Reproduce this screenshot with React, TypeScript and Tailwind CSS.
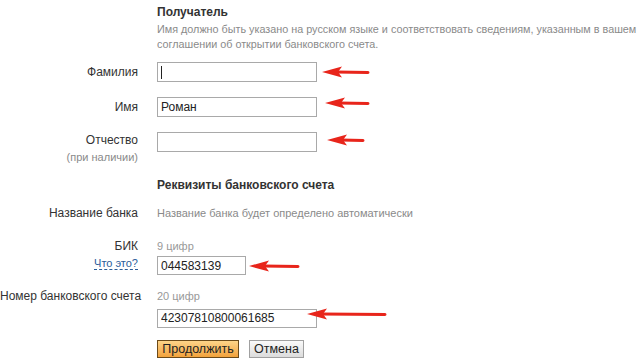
import React from 'react';

function Arrow({ width, className = '' }: { width: number; className?: string }) {
  // red hand-drawn style annotation arrow, pointing left
  return (
    <svg width={width} height="12" viewBox={`0 0 ${width} 12`} className={className}>
      <path d={`M14 6 L${width - 2} 6.5`} stroke="#e8251b" strokeWidth="3" strokeLinecap="round" />
      <path d="M0 6 L20 0.5 L16 6 L20 11.5 Z" fill="#e8251b" />
    </svg>
  );
}

function Label({ children }: { children: React.ReactNode }) {
  return <div className="w-[138px] shrink-0 text-right text-[12px] text-[#333]">{children}</div>;
}

export default function App() {
  return (
    <div className="w-[640px] h-[360px] bg-white overflow-hidden font-['Liberation_Sans',Arial,sans-serif]">
      {/* Получатель */}
      <div className="flex mt-[4px]">
        <Label>{null}</Label>
        <div className="ml-[19px]">
          <div className="text-[12px] leading-[16px] font-bold text-[#333]">Получатель</div>
          <div className="mt-[2px] w-[483px] text-[10.8px] leading-[15px] text-[#8a8a8a]">
            Имя должно быть указано на русском языке и соответствовать сведениям, указанным в вашем соглашении об открытии банковского счета.
          </div>
        </div>
      </div>

      {/* Фамилия */}
      <div className="flex mt-[10px]">
        <Label><div className="leading-[20px]">Фамилия</div></Label>
        <div className="ml-[19px] flex items-center">
          <div className="w-[160px] h-[20px] border border-[#a9a9a9] bg-white flex items-center pl-[3px]">
            <span className="w-px h-[13px] bg-[#222]" />
          </div>
          <Arrow width={48} className="ml-[5px]" />
        </div>
      </div>

      {/* Имя */}
      <div className="flex mt-[15px]">
        <Label><div className="leading-[20px]">Имя</div></Label>
        <div className="ml-[19px] flex items-start">
          <input
            readOnly
            value="Роман"
            className="w-[160px] h-[20px] border border-[#a9a9a9] px-[3px] text-[12px] text-[#222] outline-none"
          />
          <Arrow width={45} className="ml-[8px]" />
        </div>
      </div>

      {/* Отчество */}
      <div className="flex mt-[15px]">
        <Label>
          <div className="leading-[16px]">Отчество</div>
          <div className="mt-[2px] text-[11px] leading-[14px] text-[#8a8a8a]">(при наличии)</div>
        </Label>
        <div className="ml-[19px] flex items-start">
          <div className="w-[160px] h-[20px] border border-[#a9a9a9] bg-white" />
          <Arrow width={38} className="ml-[10px] mt-[2px]" />
        </div>
      </div>

      {/* Реквизиты */}
      <div className="flex mt-[13px]">
        <Label>{null}</Label>
        <div className="ml-[19px] text-[12px] leading-[16px] font-bold text-[#333]">Реквизиты банковского счета</div>
      </div>

      {/* Название банка */}
      <div className="flex mt-[12px]">
        <Label><div className="leading-[16px]">Название банка</div></Label>
        <div className="ml-[19px] text-[11px] leading-[16px] text-[#8a8a8a]">Название банка будет определено автоматически</div>
      </div>

      {/* БИК */}
      <div className="flex mt-[17px]">
        <Label>
          <div className="leading-[16px]">БИК</div>
          <div className="mt-[2px] leading-[14px] text-[11px]">
            <span className="text-[#2a5d9a] border-b border-dashed border-[#2a5d9a]">Что это?</span>
          </div>
        </Label>
        <div className="ml-[19px]">
          <div className="text-[11px] leading-[16px] text-[#999]">9 цифр</div>
          <div className="mt-[2px] flex items-center">
            <input
              readOnly
              value="044583139"
              className="w-[89px] h-[19px] border border-[#a9a9a9] px-[3px] text-[12px] text-[#222] outline-none"
            />
            <Arrow width={51} className="ml-[3px]" />
          </div>
        </div>
      </div>

      {/* Номер счета */}
      <div className="flex mt-[13px]">
        <Label><div className="leading-[16px] whitespace-nowrap">Номер банковского счета</div></Label>
        <div className="ml-[19px]">
          <div className="text-[11px] leading-[16px] text-[#999]">20 цифр</div>
          <div className="mt-[1px] relative w-[160px]">
            <input
              readOnly
              value="42307810800061685"
              className="w-[160px] h-[19px] border border-[#a9a9a9] px-[3px] text-[12px] text-[#222] outline-none"
            />
            <Arrow width={80} className="absolute left-[150px] top-[3px]" />
          </div>
          <div className="mt-[11px] flex gap-[10px]">
            <button className="w-[82px] h-[18px] border border-[#6b4a1a] bg-gradient-to-b from-[#fdd488] to-[#f2a23a] text-[12.5px] leading-[16px] text-[#222]">
              Продолжить
            </button>
            <button className="w-[55px] h-[18px] border border-[#a0a0a0] bg-gradient-to-b from-[#fafafa] to-[#dcdcdc] text-[12.5px] leading-[16px] text-[#222]">
              Отмена
            </button>
          </div>
        </div>
      </div>
    </div>
  );
}
